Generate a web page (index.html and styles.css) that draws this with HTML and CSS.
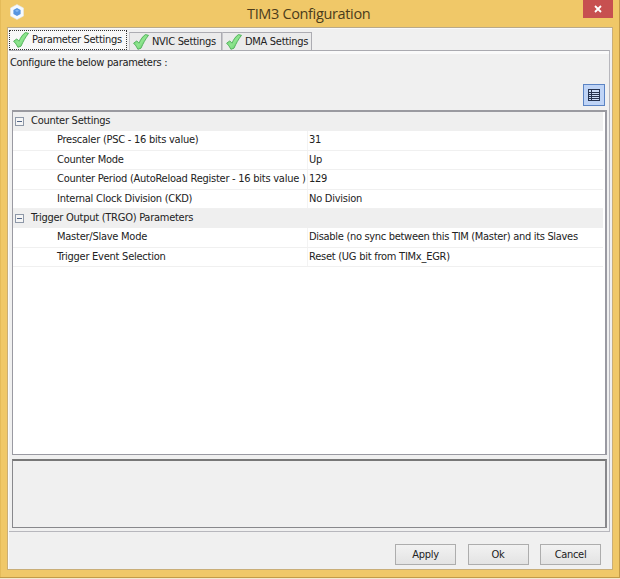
FILE: index.html
```html
<!DOCTYPE html>
<html lang="en">
<head>
<meta charset="utf-8">
<title>TIM3 Configuration</title>
<link rel="stylesheet" href="styles.css">
</head>
<body>
<svg width="0" height="0" class="defs">
  <defs>
    <linearGradient id="green" x1="0" y1="0" x2="1" y2="1"><stop offset="0" stop-color="#5fce66"/><stop offset=".5" stop-color="#8fe58f"/><stop offset="1" stop-color="#62cd66"/></linearGradient>
    <symbol id="check" viewBox="0 0 16 16"><path d="M.6 9.200 3.800 6.900 6 9.200C7.600 5.400 9.600 2.500 12.400.6L15.500 1.300C12.500 5 10 9.600 8 14.200L4.900 15.300C3.800 12.800 2.400 10.900.6 9.200Z" fill="url(#green)" stroke="#4cae56" stroke-width=".9" stroke-linejoin="round"/></symbol>
  </defs>
</svg>
<div class="window">
  <header class="titlebar">
    <svg class="app-icon" viewBox="0 0 14 16"><path d="M7 .5 13.500 4V12L7 15.500.5 12V4Z" fill="#f5faff" stroke="#e4e8e8" stroke-width=".6"/><path d="M7 4 10.600 6V10L7 12 3.400 10V6Z" fill="#5795e0"/><path d="M7 5.500 9 6.700 7 8 5 6.700Z" fill="#86b9f2"/></svg>
    <h1>TIM3 Configuration</h1>
    <button class="close" aria-label="Close"><svg viewBox="0 0 8 8"><path d="m1 1 6 6M7 1 1 7" stroke="#fff" stroke-width="1.800"/></svg></button>
  </header>
  <main class="client">
    <nav class="tabs">
      <div class="tab active"><svg class="check"><use href="#check"/></svg><span>Parameter Settings</span></div>
      <div class="tab"><svg class="check"><use href="#check"/></svg><span>NVIC Settings</span></div>
      <div class="tab last"><svg class="check"><use href="#check"/></svg><span>DMA Settings</span></div>
    </nav>
    <section class="panel">
      <p class="hint">Configure the below parameters :</p>
      <div class="toolbar">
        <button class="view" aria-label="Categories"><svg viewBox="0 0 12 12" shape-rendering="crispEdges"><path d="M0 0H12V12H0Z" fill="#26334f"/><path d="M1 1H3V3H1ZM4 1H11V3H4ZM1 4H3V5H1ZM4 4H11V5H4ZM1 6H3V7H1ZM4 6H11V7H4ZM1 8H3V9H1ZM4 8H11V9H4ZM1 10H3V11H1ZM4 10H11V11H4Z" fill="#cbdcf8"/></svg></button>
      </div>
      <div class="grid">
        <div class="group"><i class="toggle"></i><span>Counter Settings</span></div>
        <div class="row"><span>Prescaler (PSC - 16 bits value)</span><span>31</span></div>
        <div class="row"><span>Counter Mode</span><span>Up</span></div>
        <div class="row"><span>Counter Period (AutoReload Register - 16 bits value )</span><span>129</span></div>
        <div class="row"><span>Internal Clock Division (CKD)</span><span>No Division</span></div>
        <div class="group"><i class="toggle"></i><span>Trigger Output (TRGO) Parameters</span></div>
        <div class="row"><span>Master/Slave Mode</span><span class="tight">Disable (no sync between this TIM (Master) and its Slaves</span></div>
        <div class="row"><span>Trigger Event Selection</span><span>Reset (UG bit from TIMx_EGR)</span></div>
      </div>
      <div class="description"></div>
    </section>
    <footer class="actions">
      <button>Apply</button><button>Ok</button><button>Cancel</button>
    </footer>
  </main>
</div>
</body>
</html>
```
FILE: styles.css
```css
* { box-sizing: border-box; }
body { margin: 0; font: 11px/14px "DejaVu Sans Condensed", "DejaVu Sans", sans-serif; font-stretch: condensed; letter-spacing: -0.3px; color: #222; }
button { font: inherit; letter-spacing: inherit; color: inherit; padding: 0; }
.defs { display: block; height: 0; }
.window { width: 620px; height: 579px; background: #f0c868; padding: 0 7px 8px; border-bottom: 1px solid #f4e9cf; box-shadow: inset -1px -1px #c39a48, inset 1px 0 #e5bb59; }
.titlebar { height: 27px; display: flex; align-items: flex-start; }
.app-icon { width: 14px; height: 16px; margin: 4px 0 0 3px; }
h1 { margin: 0; flex: 1; padding: 4px 0 0 223px; font: 14.500px/19px "Open Sans", sans-serif; font-stretch: normal; letter-spacing: -0.35px; color: #4b3c1b; white-space: nowrap; }
.close { width: 30px; height: 18px; border: 0; background: #c75050; display: flex; align-items: center; justify-content: center; }
.close svg { width: 8px; height: 8px; }
.client { height: 543px; background: #f0f0f0; border: 1px solid #c9ae78; border-top-color: #b9a98a; box-shadow: inset 1px 1px #fafafa; padding: 2px 2px 0 1px; }
.tabs { height: 20px; display: flex; align-items: flex-end; }
.tab { height: 18px; width: 93px; display: flex; align-items: center; padding-left: 3px; border: 1px solid #acacb2; border-bottom: 0; border-left-color: #c8c8cc; background: #ebebeb; white-space: nowrap; }
.tab.active { height: 20px; width: 118px; background: #f8f8f8; border: 1px dotted #333; padding-left: 3px; margin-right: 2px; }
.tab.last { width: 90px; }
.check { width: 16px; height: 16px; margin-right: 3px; flex: none; }
.panel { height: 482px; border: 1px solid #b7b7bd; border-left: 0; border-top-color: #aaaab0; box-shadow: inset 0 3px #fafafa; padding: 5px 2px 0 3px; }
.hint { margin: 0 0 0 -2px; height: 28px; }
.toolbar { height: 26px; display: flex; justify-content: flex-end; }
.view { width: 22px; height: 22px; background: #bfd4f6; border: 1px solid #5b84c4; display: flex; align-items: center; justify-content: center; margin-right: 2px; }
.view svg { width: 12px; height: 12px; }
.grid { height: 345px; border: 1px solid #9a9aa2; border-top: 2px solid #9a9aa0; border-right-width: 2px; background: #fff; padding-right: 2px; }
.group { height: 19.400px; background: #efefef; display: flex; align-items: center; padding-left: 2px; line-height: 15px; padding-bottom: 2px; letter-spacing: -0.26px; }
.toggle { width: 9px; height: 9px; border: 1px solid #8e98a8; background: linear-gradient(#536788, #536788) center / 5px 1px no-repeat #f5f5f5; margin: 1px 7px 0 0; }
.row { height: 19.400px; display: grid; grid-template-columns: 295px 1fr; align-items: stretch; line-height: 18px; letter-spacing: -0.25px; border-bottom: 1px solid #f0f0f0; white-space: nowrap; }
.row span:first-child { padding-left: 44px; border-right: 1px solid #f3f3f3; }
.row span:last-child { padding-left: 1px; }
.row .tight { letter-spacing: -0.31px; }
.description { height: 69px; margin-top: 4px; border: 1px solid #88888c; border-top: 2px solid #777; border-right-width: 2px; }
.actions { display: flex; justify-content: flex-end; gap: 11.500px; padding: 12px 9px 0 0; }
.actions button { width: 61px; height: 21px; border: 1px solid #adadad; background: linear-gradient(#f2f2f2, #e3e3e3); }
```
